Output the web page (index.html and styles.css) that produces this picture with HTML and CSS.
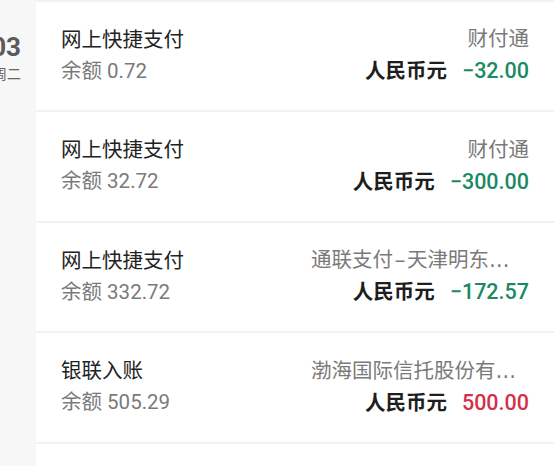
FILE: index.html
```html
<!DOCTYPE html>
<html lang="zh-CN">
<head>
<meta charset="utf-8">
<link rel="stylesheet" href="styles.css">
</head>
<body>
<div class="page">
  <aside class="date-col">
    <div class="date-num">03</div>
    <div class="date-week">周二</div>
  </aside>
  <main class="list">
    <div class="row">
      <div class="left">
        <div class="title">网上快捷支付</div>
        <div class="balance">余额 0.72</div>
      </div>
      <div class="right">
        <div class="party">财付通</div>
        <div class="amount-line"><span class="cur">人民币元</span><span class="amt out">−32.00</span></div>
      </div>
    </div>
    <div class="row">
      <div class="left">
        <div class="title">网上快捷支付</div>
        <div class="balance">余额 32.72</div>
      </div>
      <div class="right">
        <div class="party">财付通</div>
        <div class="amount-line"><span class="cur">人民币元</span><span class="amt out">−300.00</span></div>
      </div>
    </div>
    <div class="row">
      <div class="left">
        <div class="title">网上快捷支付</div>
        <div class="balance">余额 332.72</div>
      </div>
      <div class="right">
        <div class="party">通联支付<span class="dash">-</span>天津明东商贸有限公司</div>
        <div class="amount-line"><span class="cur">人民币元</span><span class="amt out">−172.57</span></div>
      </div>
    </div>
    <div class="row">
      <div class="left">
        <div class="title">银联入账</div>
        <div class="balance">余额 505.29</div>
      </div>
      <div class="right">
        <div class="party">渤海国际信托股份有限公司</div>
        <div class="amount-line"><span class="cur">人民币元</span><span class="amt in">500.00</span></div>
      </div>
    </div>
    <div class="row"></div>
  </main>
</div>
</body>
</html>
```

FILE: styles.css
```css
html, body {
  margin: 0;
  padding: 0;
  background: #ffffff;
}
body {
  font-family: Roboto, "Noto Sans CJK SC", sans-serif;
  width: 554px;
  height: 466px;
  overflow: hidden;
}
.page {
  display: flex;
  height: 466px;
  overflow: hidden;
}
.date-col {
  width: 36px;
  flex: none;
  background: #f7f7f7;
  overflow: hidden;
  display: flex;
  flex-direction: column;
  align-items: flex-end;
  padding-right: 15px;
  padding-top: 31px;
  box-sizing: border-box;
}
.date-num {
  font-size: 26px;
  font-weight: 700;
  color: #5a5a5a;
  line-height: 33px;
  white-space: nowrap;
}
.date-week {
  font-family: "Noto Sans CJK SC", sans-serif;
  font-size: 14px;
  color: #666;
  line-height: 18px;
  white-space: nowrap;
}
.list {
  flex: 1;
  margin-top: -0.5px;
  overflow: hidden;
}
.row {
  height: 110.5px;
  box-sizing: border-box;
  border-top: 2px solid #f2f2f2;
  display: flex;
  align-items: center;
  justify-content: space-between;
  padding: 0 25px;
  font-size: 20.5px;
  line-height: 31px;
}
.left {
  flex: none;
}
.title {
  color: #222;
}
.balance {
  color: #7a7a7a;
}
.right {
  display: flex;
  flex-direction: column;
  align-items: flex-end;
  min-width: 0;
  max-width: 218px;
}
.party {
  font-family: "DejaVu Sans", "Noto Sans CJK SC", sans-serif;
  color: #7a7a7a;
  white-space: nowrap;
  overflow: hidden;
  text-overflow: ellipsis;
  max-width: 100%;
}
.dash {
  font-family: Roboto, sans-serif;
  display: inline-block;
  width: 14px;
  text-align: center;
  transform: scaleX(1.8);
}
.amount-line {
  display: flex;
  align-items: baseline;
  gap: 15px;
  white-space: nowrap;
}
.cur {
  color: #1e1e1e;
  font-weight: 700;
}
.amt {
  font-weight: 500;
  font-size: 21.5px;
}
.amt.out {
  color: #1a8a62;
}
.amt.in {
  color: #d4304a;
}
```
